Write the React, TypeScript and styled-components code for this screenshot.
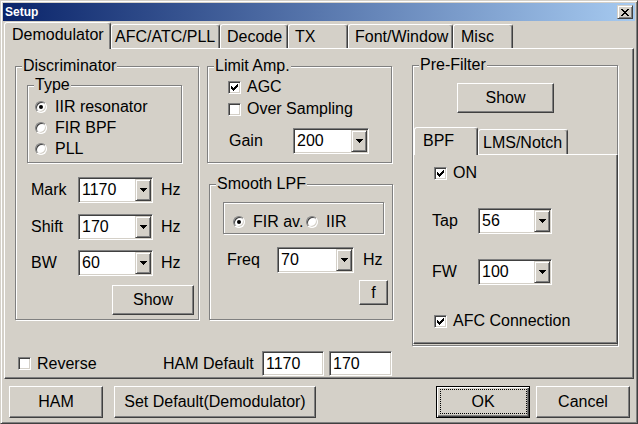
import React from "react";
import styled, { createGlobalStyle, css } from "styled-components";

const FACE = "#d4d0c8";
const SHADOW = "#808080";
const DARK = "#404040";
const HILITE = "#ffffff";

const GlobalStyle = createGlobalStyle`
  html, body {
    margin: 0;
    padding: 0;
    background: ${FACE};
  }
  body {
    font-family: "Liberation Sans", Arial, sans-serif;
    font-size: 16px;
    color: #000;
  }
  * {
    box-sizing: border-box;
  }
`;

const Window = styled.div`
  width: 638px;
  height: 424px;
  padding: 2px;
  border: 1px solid;
  border-color: ${FACE} ${DARK} ${DARK} ${FACE};
  box-shadow: inset 1px 1px 0 ${HILITE}, inset -1px -1px 0 ${SHADOW};
  background: ${FACE};
  display: flex;
  flex-direction: column;
`;

const TitleBar = styled.div`
  height: 18px;
  padding-left: 2px;
  display: flex;
  align-items: center;
  justify-content: space-between;
  background: linear-gradient(to right, #0a246a, #a6caf0);
`;

const TitleText = styled.span`
  color: #fff;
  font-weight: bold;
  font-size: 12px;
  line-height: 18px;
`;

const raised = css`
  border: 1px solid;
  border-color: ${HILITE} ${DARK} ${DARK} ${HILITE};
  box-shadow: inset -1px -1px 0 ${SHADOW}, inset 1px 1px 0 ${FACE};
  background: ${FACE};
`;

const sunken = css`
  border: 1px solid;
  border-color: ${SHADOW} ${HILITE} ${HILITE} ${SHADOW};
  box-shadow: inset 1px 1px 0 ${DARK}, inset -1px -1px 0 ${FACE};
  background: #fff;
`;

const CloseButton = styled.span`
  width: 16px;
  height: 14px;
  margin-right: 2px;
  display: flex;
  align-items: center;
  justify-content: center;
  border: 1px solid;
  border-color: ${FACE} ${DARK} ${DARK} ${FACE};
  box-shadow: inset 1px 1px 0 ${HILITE}, inset -1px -1px 0 ${SHADOW};
  background: ${FACE};
`;

const Body = styled.div`
  flex: 1;
  padding: 0 1px;
  display: flex;
  flex-direction: column;
`;

const TabStrip = styled.div<{ $h: number; $mt?: number; $ml?: number }>`
  height: ${(p) => p.$h}px;
  margin-top: ${(p) => p.$mt ?? 0}px;
  margin-left: ${(p) => p.$ml ?? 0}px;
  display: flex;
  align-items: flex-end;
`;

const Tab = styled.div<{
  $active?: boolean;
  $w: number;
  $h: number;
  $pl: number;
  $lh: number;
}>`
  position: relative;
  z-index: ${(p) => (p.$active ? 1 : 0)};
  width: ${(p) => p.$w}px;
  height: ${(p) => p.$h}px;
  margin-bottom: ${(p) => (p.$active ? -1 : 0)}px;
  padding-left: ${(p) => p.$pl}px;
  line-height: ${(p) => p.$lh}px;
  white-space: nowrap;
  border: 1px solid;
  border-bottom: none;
  border-color: ${HILITE} ${DARK} transparent ${HILITE};
  border-radius: 3px 3px 0 0;
  box-shadow: inset -1px 0 0 ${SHADOW};
  background: ${FACE};
`;

const TabPanel = styled.div<{ $w?: number; $h: number }>`
  width: ${(p) => (p.$w ? `${p.$w}px` : "auto")};
  height: ${(p) => p.$h}px;
  border: 1px solid;
  border-color: ${HILITE} ${DARK} ${DARK} ${HILITE};
  box-shadow: inset -1px -1px 0 ${SHADOW};
  display: flex;
  flex-direction: column;
  align-items: flex-start;
`;

const TopRow = styled.div`
  height: 280px;
  margin-top: 17px;
  padding-left: 10px;
  display: flex;
  align-items: flex-start;
`;

const MiddleColumn = styled.div`
  width: 186px;
  margin-left: 8px;
  display: flex;
  flex-direction: column;
  align-items: flex-start;
`;

const GroupBox = styled.div<{
  $w: number;
  $h: number;
  $mt?: number;
  $ml?: number;
}>`
  position: relative;
  width: ${(p) => p.$w}px;
  height: ${(p) => p.$h}px;
  margin-top: ${(p) => p.$mt ?? 0}px;
  margin-left: ${(p) => p.$ml ?? 0}px;
  border: 1px solid ${SHADOW};
  box-shadow: inset 1px 1px 0 ${HILITE}, 1px 1px 0 ${HILITE};
  display: flex;
  flex-direction: column;
  align-items: flex-start;
`;

const Legend = styled.span`
  position: absolute;
  top: -10px;
  left: 6px;
  padding: 0 1px;
  line-height: 18px;
  white-space: nowrap;
  background: ${FACE};
`;

const OptionList = styled.div<{ $pt: number; $pl: number; $row?: boolean }>`
  padding-top: ${(p) => p.$pt}px;
  padding-left: ${(p) => p.$pl}px;
  display: flex;
  flex-direction: ${(p) => (p.$row ? "row" : "column")};
`;

const Option = styled.div<{ $h: number; $w?: number; $mt?: number; $ml?: number }>`
  height: ${(p) => p.$h}px;
  width: ${(p) => (p.$w ? `${p.$w}px` : "auto")};
  margin-top: ${(p) => p.$mt ?? 0}px;
  margin-left: ${(p) => p.$ml ?? 0}px;
  display: flex;
  align-items: center;
  white-space: nowrap;
`;

const RadioCircle = styled.span<{ $on?: boolean }>`
  position: relative;
  flex: none;
  width: 12px;
  height: 12px;
  margin-right: 8px;
  border-radius: 50%;
  ${sunken};
  ${(p) =>
    p.$on &&
    css`
      &::after {
        content: "";
        position: absolute;
        left: 3px;
        top: 3px;
        width: 4px;
        height: 4px;
        border-radius: 50%;
        background: #000;
      }
    `}
`;

const CheckSquare = styled.span`
  flex: none;
  width: 13px;
  height: 13px;
  margin-right: 6px;
  display: flex;
  align-items: center;
  justify-content: center;
  ${sunken};
`;

const FieldRow = styled.div<{ $mt: number; $pl: number }>`
  margin-top: ${(p) => p.$mt}px;
  padding-left: ${(p) => p.$pl}px;
  display: flex;
  align-items: center;
`;

const FieldLabel = styled.span<{ $w: number }>`
  width: ${(p) => p.$w}px;
  white-space: nowrap;
`;

const Unit = styled.span<{ $ml: number }>`
  margin-left: ${(p) => p.$ml}px;
`;

const ComboBox = styled.div<{ $w: number }>`
  width: ${(p) => p.$w}px;
  height: 26px;
  padding: 1px;
  display: flex;
  ${sunken};
`;

const ComboText = styled.span`
  flex: 1;
  padding-left: 2px;
  line-height: 22px;
`;

const DropButton = styled.span`
  width: 16px;
  display: flex;
  align-items: center;
  justify-content: center;
  border: 1px solid;
  border-color: ${FACE} ${DARK} ${DARK} ${FACE};
  box-shadow: inset 1px 1px 0 ${HILITE}, inset -1px -1px 0 ${SHADOW};
  background: ${FACE};
`;

const EditBox = styled.div<{ $w: number; $ml?: number }>`
  width: ${(p) => p.$w}px;
  height: 25px;
  margin-left: ${(p) => p.$ml ?? 0}px;
  padding-left: 3px;
  line-height: 23px;
  ${sunken};
`;

const PushButton = styled.div<{
  $w: number;
  $h: number;
  $mt?: number;
  $ml?: number;
  $mr?: number;
  $end?: boolean;
  $default?: boolean;
}>`
  position: relative;
  width: ${(p) => p.$w}px;
  height: ${(p) => p.$h}px;
  margin-top: ${(p) => p.$mt ?? 0}px;
  margin-left: ${(p) => (p.$ml === undefined ? "0" : `${p.$ml}px`)};
  margin-right: ${(p) => p.$mr ?? 0}px;
  align-self: ${(p) => (p.$end ? "flex-end" : "auto")};
  display: flex;
  align-items: center;
  justify-content: center;
  white-space: nowrap;
  ${raised};
  ${(p) =>
    p.$default &&
    css`
      border-color: #000;
      box-shadow: inset 1px 1px 0 ${HILITE}, inset -1px -1px 0 ${DARK},
        inset -2px -2px 0 ${SHADOW};
      &::after {
        content: "";
        position: absolute;
        left: 3px;
        top: 2px;
        right: 2px;
        bottom: 3px;
        border: 1px dotted #000;
      }
    `}
`;

const BottomRow = styled.div`
  height: 25px;
  margin-top: 5px;
  padding-left: 13px;
  display: flex;
  align-items: center;
`;

const Footer = styled.div`
  height: 32px;
  margin-top: 7px;
  padding-right: 4px;
  display: flex;
`;

const PushLeft = styled.div`
  flex: 1;
`;

function DownArrow() {
  return (
    <svg width="7" height="4" viewBox="0 0 7 4" shapeRendering="crispEdges">
      <rect x="0" y="0" width="7" height="1" fill="#000" />
      <rect x="1" y="1" width="5" height="1" fill="#000" />
      <rect x="2" y="2" width="3" height="1" fill="#000" />
      <rect x="3" y="3" width="1" height="1" fill="#000" />
    </svg>
  );
}

function CloseGlyph() {
  const rows = [
    [0, 1, 6, 7],
    [1, 2, 5, 6],
    [2, 3, 4, 5],
    [3, 4],
    [2, 3, 4, 5],
    [1, 2, 5, 6],
    [0, 1, 6, 7],
  ];
  return (
    <svg width="8" height="7" viewBox="0 0 8 7" shapeRendering="crispEdges">
      {rows.map((cols, y) =>
        cols.map((x) => (
          <rect key={`${x}-${y}`} x={x} y={y} width="1" height="1" fill="#000" />
        ))
      )}
    </svg>
  );
}

function CheckGlyph() {
  return (
    <svg width="7" height="7" viewBox="0 0 7 7" shapeRendering="crispEdges">
      <rect x="6" y="0" width="1" height="3" fill="#000" />
      <rect x="5" y="1" width="1" height="3" fill="#000" />
      <rect x="4" y="2" width="1" height="3" fill="#000" />
      <rect x="3" y="3" width="1" height="3" fill="#000" />
      <rect x="2" y="4" width="1" height="3" fill="#000" />
      <rect x="1" y="3" width="1" height="3" fill="#000" />
      <rect x="0" y="2" width="1" height="3" fill="#000" />
    </svg>
  );
}

function Combo({ value, width }: { value: string; width: number }) {
  return (
    <ComboBox $w={width}>
      <ComboText>{value}</ComboText>
      <DropButton>
        <DownArrow />
      </DropButton>
    </ComboBox>
  );
}

function Check({ checked, children }: { checked?: boolean; children: React.ReactNode }) {
  return (
    <>
      <CheckSquare>{checked && <CheckGlyph />}</CheckSquare>
      {children}
    </>
  );
}

const mainTabs = [
  { label: "Demodulator", w: 107, pl: 7, active: true },
  { label: "AFC/ATC/PLL", w: 109, pl: 3 },
  { label: "Decode", w: 68, pl: 6 },
  { label: "TX", w: 60, pl: 6 },
  { label: "Font/Window", w: 105, pl: 6 },
  { label: "Misc", w: 60, pl: 7 },
];

export default function App() {
  return (
    <>
      <GlobalStyle />
      <Window>
        <TitleBar>
          <TitleText>Setup</TitleText>
          <CloseButton>
            <CloseGlyph />
          </CloseButton>
        </TitleBar>

        <Body>
          <TabStrip $h={26} $mt={1}>
            {mainTabs.map((t) => (
              <Tab
                key={t.label}
                $active={t.active}
                $w={t.w}
                $h={t.active ? 27 : 24}
                $pl={t.pl}
                $lh={23}
              >
                {t.label}
              </Tab>
            ))}
          </TabStrip>

          <TabPanel $h={331}>
            <TopRow>
              <GroupBox $w={184} $h={254}>
                <Legend>Discriminator</Legend>
                <GroupBox $w={155} $h={78} $mt={18} $ml={11}>
                  <Legend>Type</Legend>
                  <OptionList $pt={10} $pl={7}>
                    <Option $h={21}>
                      <RadioCircle $on />
                      IIR resonator
                    </Option>
                    <Option $h={21}>
                      <RadioCircle />
                      FIR BPF
                    </Option>
                    <Option $h={21}>
                      <RadioCircle />
                      PLL
                    </Option>
                  </OptionList>
                </GroupBox>
                <FieldRow $mt={14} $pl={15}>
                  <FieldLabel $w={47}>Mark</FieldLabel>
                  <Combo value="1170" width={75} />
                  <Unit $ml={8}>Hz</Unit>
                </FieldRow>
                <FieldRow $mt={11} $pl={15}>
                  <FieldLabel $w={47}>Shift</FieldLabel>
                  <Combo value="170" width={75} />
                  <Unit $ml={8}>Hz</Unit>
                </FieldRow>
                <FieldRow $mt={10} $pl={15}>
                  <FieldLabel $w={47}>BW</FieldLabel>
                  <Combo value="60" width={75} />
                  <Unit $ml={8}>Hz</Unit>
                </FieldRow>
                <PushButton $w={82} $h={30} $mt={9} $mr={4} $end>
                  Show
                </PushButton>
              </GroupBox>

              <MiddleColumn>
                <GroupBox $w={185} $h={97}>
                  <Legend>Limit Amp.</Legend>
                  <Option $h={22} $mt={9} $ml={20}>
                    <Check checked>AGC</Check>
                  </Option>
                  <Option $h={22} $ml={20}>
                    <Check>Over Sampling</Check>
                  </Option>
                  <FieldRow $mt={8} $pl={21}>
                    <FieldLabel $w={64}>Gain</FieldLabel>
                    <Combo value="200" width={76} />
                  </FieldRow>
                </GroupBox>

                <GroupBox $w={184} $h={136} $mt={21} $ml={2}>
                  <Legend>Smooth LPF</Legend>
                  <GroupBox $w={161} $h={32} $mt={17} $ml={13}>
                    <OptionList $pt={8} $pl={9} $row>
                      <Option $h={21} $w={73}>
                        <RadioCircle $on />
                        FIR av.
                      </Option>
                      <Option $h={21}>
                        <RadioCircle />
                        IIR
                      </Option>
                    </OptionList>
                  </GroupBox>
                  <FieldRow $mt={13} $pl={17}>
                    <FieldLabel $w={50}>Freq</FieldLabel>
                    <Combo value="70" width={77} />
                    <Unit $ml={9}>Hz</Unit>
                  </FieldRow>
                  <PushButton $w={29} $h={25} $mt={7} $mr={4} $end>
                    f
                  </PushButton>
                </GroupBox>
              </MiddleColumn>

              <GroupBox $w={206} $h={281} $mt={-1} $ml={19}>
                <Legend>Pre-Filter</Legend>
                <PushButton $w={97} $h={30} $mt={17} $ml={44}>
                  Show
                </PushButton>
                <TabStrip $h={27} $mt={14} $ml={1}>
                  <Tab $active $w={64} $h={28} $pl={8} $lh={25}>
                    BPF
                  </Tab>
                  <Tab $w={90} $h={25} $pl={4} $lh={25}>
                    LMS/Notch
                  </Tab>
                </TabStrip>
                <TabPanel $w={205} $h={190}>
                  <Option $h={22} $mt={7} $ml={20}>
                    <Check checked>ON</Check>
                  </Option>
                  <FieldRow $mt={24} $pl={18}>
                    <FieldLabel $w={46}>Tap</FieldLabel>
                    <Combo value="56" width={74} />
                  </FieldRow>
                  <FieldRow $mt={25} $pl={18}>
                    <FieldLabel $w={46}>FW</FieldLabel>
                    <Combo value="100" width={74} />
                  </FieldRow>
                  <Option $h={22} $mt={25} $ml={20}>
                    <Check checked>AFC Connection</Check>
                  </Option>
                </TabPanel>
              </GroupBox>
            </TopRow>

            <BottomRow>
              <Option $h={25} $w={145}>
                <Check>Reverse</Check>
              </Option>
              <FieldLabel $w={99}>HAM Default</FieldLabel>
              <EditBox $w={62}>1170</EditBox>
              <EditBox $w={63} $ml={5}>
                170
              </EditBox>
            </BottomRow>
          </TabPanel>

          <Footer>
            <PushButton $w={94} $h={32} $ml={5}>
              HAM
            </PushButton>
            <PushButton $w={202} $h={32} $ml={11}>
              Set Default(Demodulator)
            </PushButton>
            <PushLeft />
            <PushButton $w={94} $h={32} $default>
              OK
            </PushButton>
            <PushButton $w={94} $h={32} $ml={6}>
              Cancel
            </PushButton>
          </Footer>
        </Body>
      </Window>
    </>
  );
}
